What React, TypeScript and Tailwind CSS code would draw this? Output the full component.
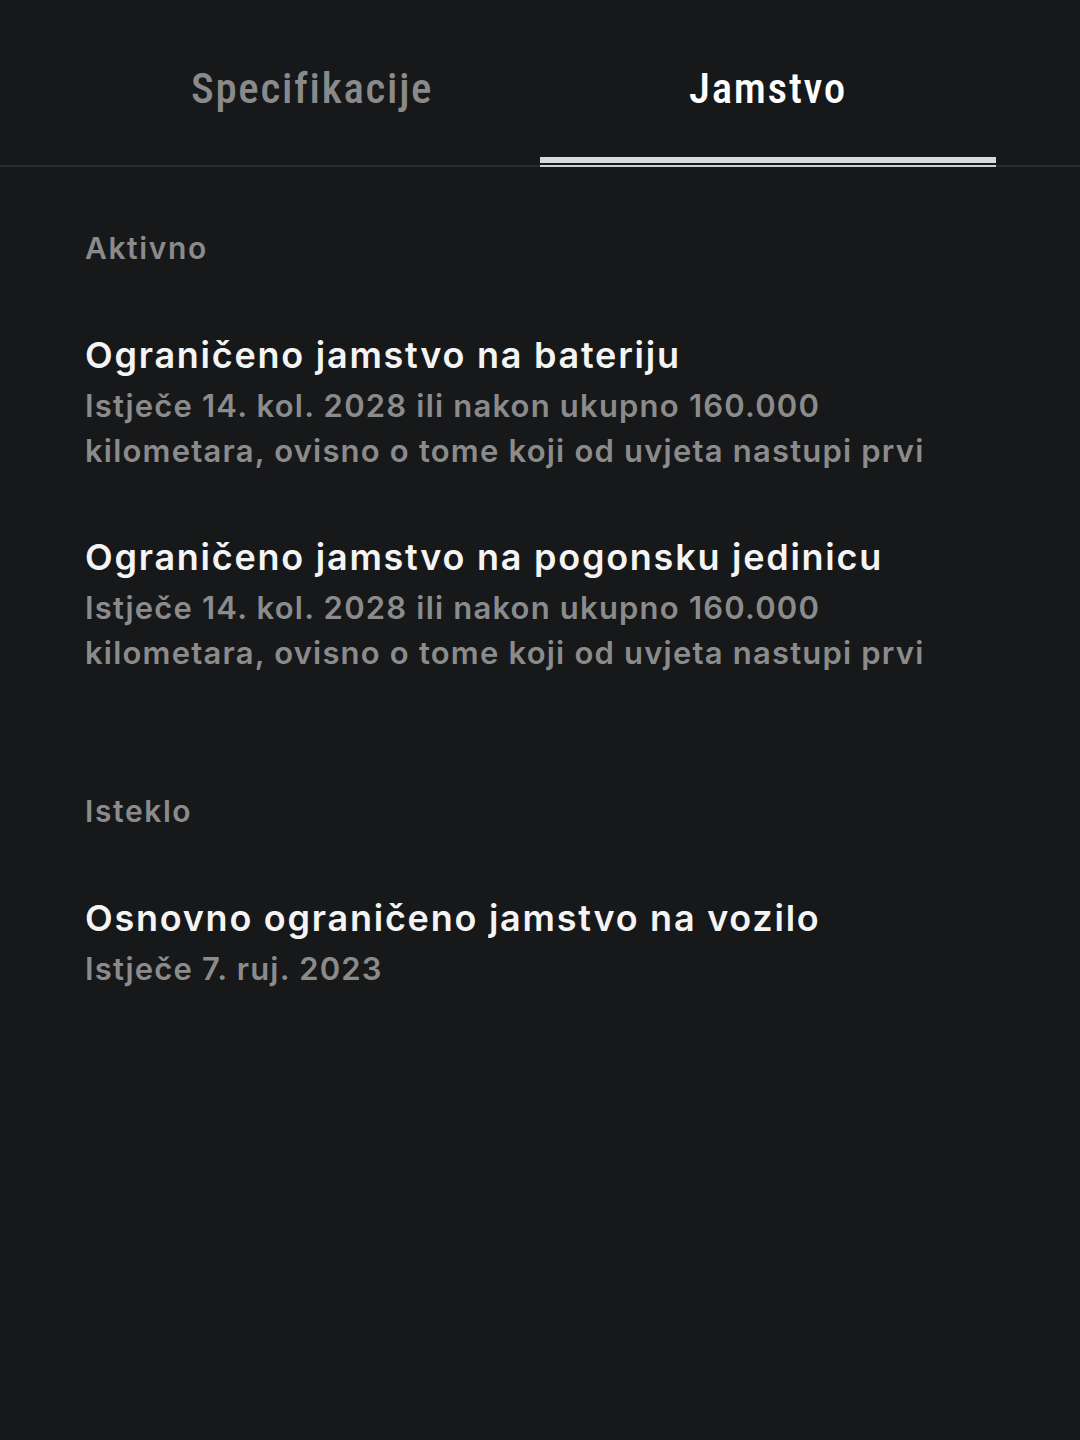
import React from 'react';

interface WarrantyItem {
  title: string;
  lines: string[];
}

const active: WarrantyItem[] = [
  {
    title: 'Ograničeno jamstvo na bateriju',
    lines: ['Istječe 14. kol. 2028 ili nakon ukupno 160.000', 'kilometara, ovisno o tome koji od uvjeta nastupi prvi'],
  },
  {
    title: 'Ograničeno jamstvo na pogonsku jedinicu',
    lines: ['Istječe 14. kol. 2028 ili nakon ukupno 160.000', 'kilometara, ovisno o tome koji od uvjeta nastupi prvi'],
  },
];

const expired: WarrantyItem[] = [
  {
    title: 'Osnovno ograničeno jamstvo na vozilo',
    lines: ['Istječe 7. ruj. 2023'],
  },
];

const bodyFont = { fontFamily: 'Inter, "Noto Sans", sans-serif' };
const tabFont = { fontFamily: '"Roboto Condensed", "Liberation Sans Narrow", Roboto, sans-serif' };

const Item = ({ item }: { item: WarrantyItem }) => (
  <div>
    <div className="text-[36px] leading-[56px] font-semibold text-[#f4f4f4] tracking-[1.75px]">{item.title}</div>
    {item.lines.map((l) => (
      <div key={l} className="text-[31px] leading-[45px] font-semibold text-[#8b8b8c] tracking-[1.2px]">
        {l}
      </div>
    ))}
  </div>
);

export default function App() {
  const tabs = ['Specifikacije', 'Jamstvo'];
  const current = 'Jamstvo';

  return (
    <div className="w-[1080px] h-[1440px] bg-[#17181a]" style={bodyFont}>
      {/* tabs */}
      <div className="h-[167px] border-b-2 border-[#2a2b2d] flex px-[84px]">
        {tabs.map((t) => (
          <div key={t} className="relative flex-1 flex justify-center pt-[60px]">
            <span
              className={`text-[43px] leading-[56px] font-medium tracking-[1.7px] ${t === current ? 'text-white' : 'text-[#8a8a8b]'}`}
              style={tabFont}
            >
              {t}
            </span>
            {t === current && (
              <div className="absolute left-0 right-0 bottom-[-2px] flex flex-col">
                <div className="h-[6px] bg-[#d8d9da]" />
                <div className="h-[2px] bg-[#17181a]" />
                <div className="h-[2px] bg-[#cfcfcf]" />
              </div>
            )}
          </div>
        ))}
      </div>

      <div className="px-[85px] pt-[61px]">
        <div className="text-[30px] leading-[40px] font-semibold text-[#8b8b8c] tracking-[1.6px]">Aktivno</div>
        <div className="mt-[59px] flex flex-col gap-[56px]">
          {active.map((it) => (
            <Item key={it.title} item={it} />
          ))}
        </div>

        <div className="mt-[116px] text-[30px] leading-[40px] font-semibold text-[#8b8b8c] tracking-[1.6px]">Isteklo</div>
        <div className="mt-[59px] flex flex-col gap-[56px]">
          {expired.map((it) => (
            <Item key={it.title} item={it} />
          ))}
        </div>
      </div>
    </div>
  );
}
